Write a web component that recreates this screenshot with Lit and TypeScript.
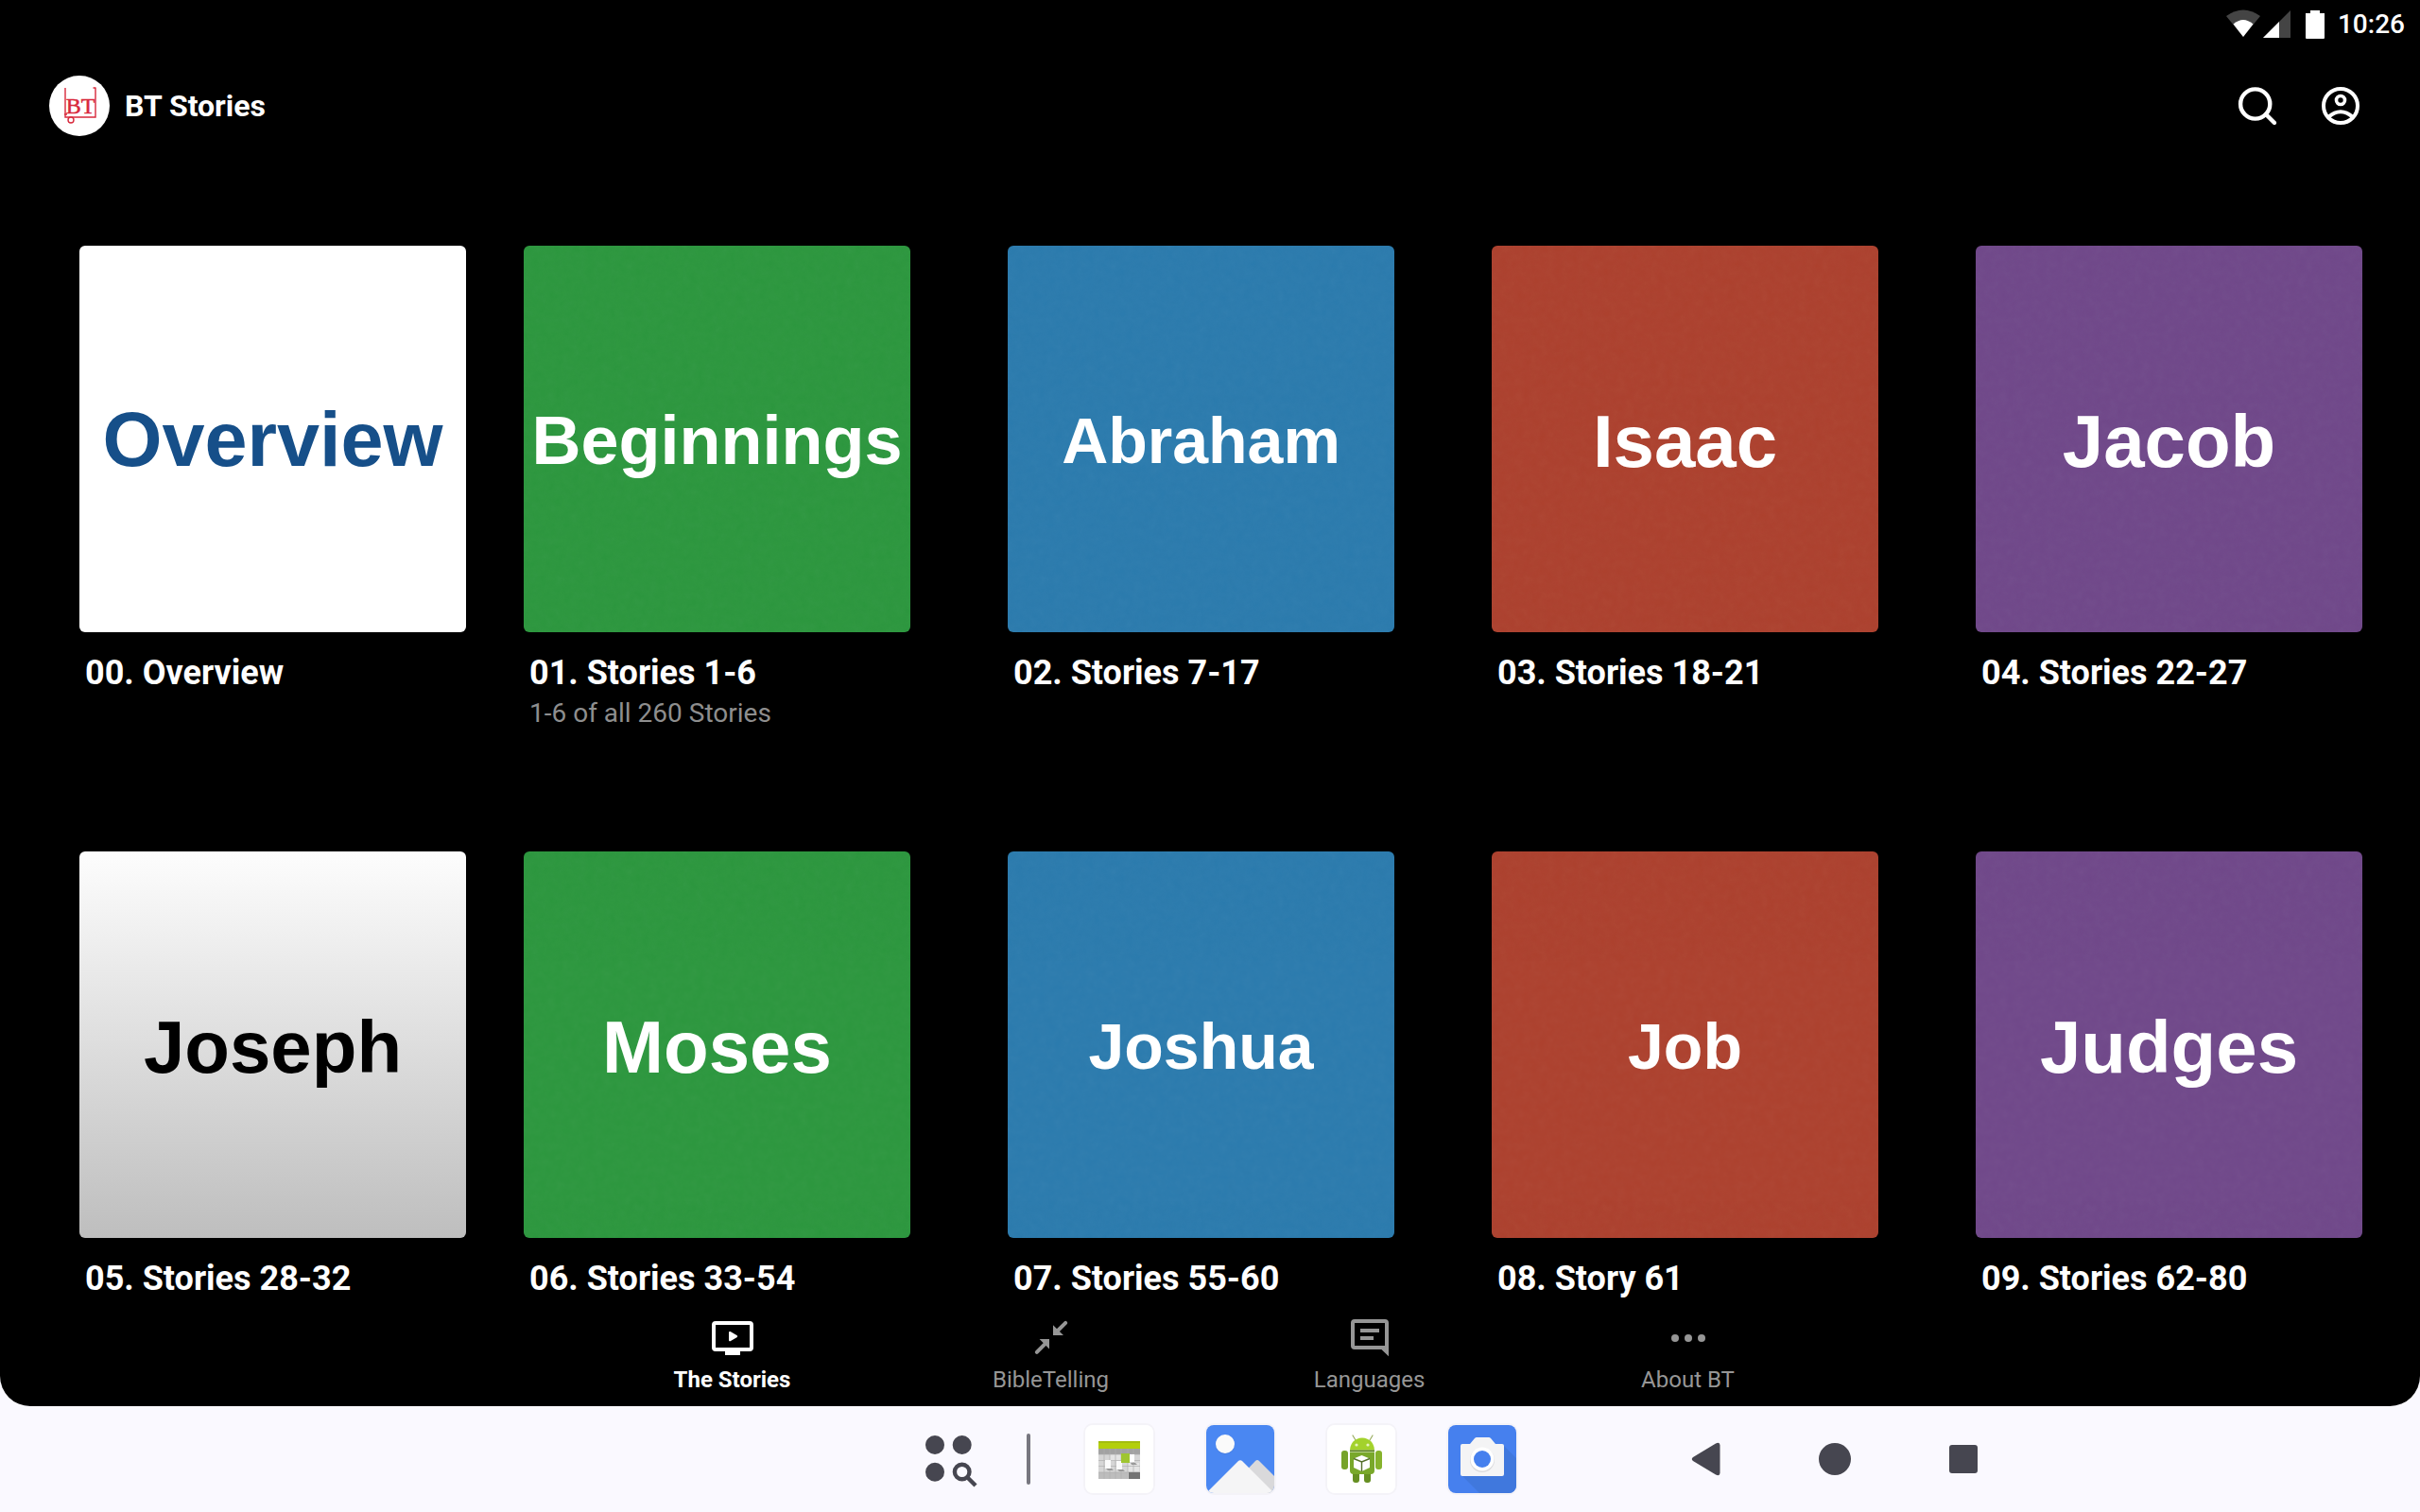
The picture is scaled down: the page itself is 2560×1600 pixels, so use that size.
import { LitElement, html, css, svg } from "lit";
import { customElement } from "lit/decorators.js";
import { classMap } from "lit/directives/class-map.js";

interface Series {
  cover: string;
  theme: string;
  size: string;
  title: string;
  note?: string;
}

const SERIES: Series[] = [
  { cover: "Overview", theme: "plain", size: "huge", title: "00. Overview" },
  { cover: "Beginnings", theme: "green", size: "small", title: "01. Stories 1-6", note: "1-6 of all 260 Stories" },
  { cover: "Abraham", theme: "blue", size: "tiny", title: "02. Stories 7-17" },
  { cover: "Isaac", theme: "red", size: "large", title: "03. Stories 18-21" },
  { cover: "Jacob", theme: "purple", size: "large", title: "04. Stories 22-27" },
  { cover: "Joseph", theme: "silver", size: "large", title: "05. Stories 28-32" },
  { cover: "Moses", theme: "green", size: "large", title: "06. Stories 33-54" },
  { cover: "Joshua", theme: "blue", size: "tiny", title: "07. Stories 55-60" },
  { cover: "Job", theme: "red", size: "tiny", title: "08. Story 61" },
  { cover: "Judges", theme: "purple", size: "large", title: "09. Stories 62-80" },
];

const TABS = [
  {
    label: "The Stories",
    icon: svg`<path fill-rule="evenodd" d="M3 3h18a2 2 0 0 1 2 2v12a2 2 0 0 1-2 2h-5v2H8v-2H3a2 2 0 0 1-2-2V5a2 2 0 0 1 2-2zM3 5v12h18V5z"/><path d="M10 9.1c0-.6.5-.8 1-.5l3.2 1.9c.5.3.5.8 0 1.1L11 13.5c-.5.3-1 0-1-.5z"/>`,
  },
  {
    label: "BibleTelling",
    icon: svg`<path d="M4.400 19.4l4.6-4.6M19.6 3.9l-4.6 4.6" stroke="currentColor" stroke-width="2" stroke-linecap="round"/><path d="M5.8 12.5H11v5.3zM13 5.1v5.400h5.5z"/>`,
  },
  {
    label: "Languages",
    icon: svg`<path fill-rule="evenodd" d="M4 2h16a2 2 0 0 1 2 2v17.6L18.2 18H4a2 2 0 0 1-2-2V4a2 2 0 0 1 2-2zM4 4v12h16V4z"/><path d="M7 7h10v2H7zM7 11h7v2H7z"/>`,
  },
  {
    label: "About BT",
    icon: svg`<circle cx="5" cy="12" r="2"/><circle cx="12" cy="12" r="2"/><circle cx="19" cy="12" r="2"/>`,
  },
];

@customElement("series-card")
export class SeriesCard extends LitElement {
  static properties = { item: { attribute: false } };
  declare item: Series;

  static styles = css`
    :host {
      display: block;
    }
    .card {
      display: block;
      color: #fff;
      text-decoration: none;
    }
    .cover {
      display: grid;
      place-items: center;
      aspect-ratio: 1;
      border-radius: 6px;
      overflow: hidden;
      font-family: "Liberation Sans", Arial, sans-serif;
      font-weight: 700;
      line-height: 1;
    }
    .cover > * {
      grid-area: 1 / 1;
    }
    .grain {
      width: 100%;
      height: 100%;
      opacity: 0.04;
    }
    .word {
      z-index: 1;
      padding-top: 2px;
    }
    .huge { font-size: 81px; }
    .large { font-size: 78px; padding-top: 4px; }
    .small { font-size: 72px; }
    .tiny { font-size: 68px; }
    .plain { background: #fff; color: #164f89; }
    .silver { background: linear-gradient(#fdfdfd, #bebebe); color: #000; }
    .green { background: #2c973e; }
    .blue { background: #2b7bae; }
    .red { background: #ad412e; }
    .purple { background: #70488a; }
    .title {
      margin: 22px 0 0;
      padding-left: 6px;
      font-size: 36px;
      line-height: 42px;
      font-weight: 700;
    }
    .note {
      margin: 5px 0 0;
      padding-left: 6px;
      font-size: 28px;
      line-height: 34px;
      color: #8e8e8e;
    }
  `;

  render() {
    const { cover, theme, size, title, note } = this.item;
    const flat = theme === "plain" || theme === "silver";
    return html`
      <a class="card" href="#stories">
        <div class="cover ${theme}">
          ${flat
            ? null
            : html`<svg class="grain" aria-hidden="true">
                <filter id="grain">
                  <feTurbulence type="fractalNoise" baseFrequency="0.12" numOctaves="4" seed="4" />
                  <feColorMatrix type="saturate" values="0" />
                </filter>
                <rect width="100%" height="100%" filter="url(#grain)" />
              </svg>`}
          <span class="word ${size}">${cover}</span>
        </div>
        <h2 class="title">${title}</h2>
        ${note ? html`<p class="note">${note}</p>` : null}
      </a>
    `;
  }
}

@customElement("app-root")
export class AppRoot extends LitElement {
  static styles = css`
    :host {
      display: flex;
      flex-direction: column;
      height: 100vh;
      overflow: hidden;
      background: #faf9ff;
      font-family: Roboto, sans-serif;
      color: #fff;
    }
    button {
      display: grid;
      place-items: center;
      padding: 0;
      border: 0;
      background: none;
      color: inherit;
      font: inherit;
      cursor: pointer;
    }
    svg {
      display: block;
    }
    .screen {
      flex: 1;
      min-height: 0;
      display: flex;
      flex-direction: column;
      background: #000;
      border-radius: 0 0 32px 32px;
      overflow: hidden;
    }
    .status {
      display: flex;
      justify-content: flex-end;
      align-items: center;
      gap: 13px;
      height: 50px;
      padding-right: 16px;
      font-size: 28px;
      font-weight: 500;
    }
    .header {
      display: flex;
      align-items: center;
      gap: 16px;
      height: 124px;
      padding: 0 60px 0 52px;
    }
    .brand {
      flex: 1;
      margin: 0;
      font-size: 32px;
      font-weight: 700;
    }
    .actions {
      display: flex;
      gap: 40px;
    }
    .content {
      flex: 1;
      min-height: 0;
      overflow: hidden;
      padding-top: 86px;
    }
    .grid {
      display: grid;
      grid-template-columns: repeat(5, 1fr);
      row-gap: 129px;
    }
    .cell {
      padding: 0 61px 0 42px;
    }
    .cell:nth-child(5n + 1) {
      padding: 0 19px 0 84px;
    }
    .tabs {
      display: flex;
      justify-content: center;
      height: 112px;
    }
    .tab {
      flex: 0 1 337px;
      align-content: start;
      gap: 4px;
      padding-top: 16px;
      font-size: 24px;
      line-height: 32px;
      color: #969696;
    }
    .tab.active {
      color: #fff;
      font-weight: 700;
    }
    .taskbar {
      display: grid;
      grid-template-columns: 968fr auto 169fr auto 451fr;
      align-items: center;
      height: 112px;
      color: #464650;
    }
    .dock {
      grid-column: 2;
      display: flex;
      align-items: center;
    }
    .divider {
      width: 4px;
      height: 54px;
      margin: 0 58px 0 46px;
      border-radius: 2px;
      background: #777780;
    }
    .apps {
      display: flex;
      gap: 56px;
    }
    .app {
      border-radius: 8px;
      overflow: hidden;
      box-shadow: 0 0 0 2px #f4f3f8;
    }
    .system {
      grid-column: 4;
      display: flex;
      gap: 72px;
    }
  `;

  private calendar() {
    return svg`
      <rect width="72" height="72" fill="#fff"/>
      <rect x="14" y="25" width="44" height="32" fill="#d6d6d6"/>
      <rect x="14" y="25" width="44" height="6" fill="#a2a2a2"/>
      <rect x="14" y="50" width="31" height="7" fill="#bdbdbd"/>
      <path d="M26 31h12v7H26zM45 40h12v9H45z" fill="#e4e4e4"/>
      <path d="M20 25v32M26 25v32M32 25v32M38 25v32M45 25v32M51 25v32M14 31h44M14 37.5h44M14 43.5h44M14 50h44" stroke="#b0b0b0" stroke-width=".7"/>
      <rect x="14" y="17" width="44" height="8" fill="#b3cf0c"/>
      <rect x="14" y="17" width="44" height="2" fill="#a3bd10"/>
      <path d="M22 46h6l2 2h-6zM34 47h6l2 2h-6zM48 40h5l2 2h-6z" fill="#999"/>
      <rect x="21" y="37" width="6" height="9" fill="#fafafa"/>
      <rect x="33" y="38" width="6" height="9" fill="#fafafa"/>
      <rect x="47" y="31" width="5" height="8" fill="#fff"/>
      <rect x="38" y="30" width="9" height="10" fill="#9fc530"/>
      <rect x="46" y="50" width="12" height="7" fill="#747474"/>`;
  }

  private photos() {
    return svg`
      <rect width="72" height="72" fill="#4a87f2"/>
      <circle cx="20" cy="21" r="10" fill="#3f73cf" opacity=".5"/>
      <circle cx="20" cy="20" r="10" fill="#fafafa"/>
      <path d="M34 57 52 38q2-2 4 0L72 54v18H48z" fill="#d9d9db"/>
      <path d="M44 47 72 72H50z" fill="#cfcfd1"/>
      <path d="M2 70 33.5 38.5q2.5-2.5 5 0L72 72H4q-2 0-2-2z" fill="#f5f5f6"/>`;
  }

  private android() {
    return svg`
      <rect width="72" height="72" fill="#fff"/>
      <path d="M30 16l-3-5M45 16l3-5" stroke="#9aae62" stroke-width="1.2" stroke-linecap="round"/>
      <rect x="27" y="48" width="7" height="13" rx="3" fill="#668f22"/>
      <rect x="39" y="48" width="7" height="13" rx="3" fill="#668f22"/>
      <rect x="15" y="27" width="7" height="20" rx="3" fill="#76a329"/>
      <rect x="51" y="27" width="7" height="20" rx="3" fill="#86b32c"/>
      <path d="M24 28.5h26V48q0 4-4 4H28q-4 0-4-4z" fill="#79a82a"/>
      <path d="M24 26.5C25 9 49 9 50 26.5z" fill="#a3d22c"/>
      <path d="M24 26.5h26v1.5H24z" fill="#587d1d"/>
      <circle cx="31" cy="21" r="1.6" fill="#e7f5c0"/>
      <circle cx="43" cy="21" r="1.6" fill="#e7f5c0"/>
      <path d="M28 35.5 36.5 32 45 35.5V45l-8.5 4L28 45z" fill="#fff"/>
      <path d="M28 35.5l8.5 3.500 8.5-3.500M36.5 39v10" fill="none" stroke="#55702a" stroke-width="1.4"/>`;
  }

  private camera() {
    return svg`
      <rect width="72" height="72" fill="#4680ee"/>
      <path d="M59 22 72 35v37H33L15 54z" fill="#4078dd"/>
      <path d="M15 20h8l5-6q1-1 2-1h13q1 0 2 1l5 6h7q2 0 2 2v30q0 2-2 2H15q-2 0-2-2V22q0-2 2-2z" fill="#f4f4f5"/>
      <circle cx="36" cy="37" r="13" fill="#dcdcde"/>
      <circle cx="36" cy="36" r="12.5" fill="#fff"/>
      <circle cx="36" cy="36" r="9" fill="#4680ee"/>`;
  }

  render() {
    const apps = [
      { name: "Calendar", art: this.calendar() },
      { name: "Gallery", art: this.photos() },
      { name: "Android", art: this.android() },
      { name: "Camera", art: this.camera() },
    ];
    return html`
      <div class="screen">
        <div class="status">
          <svg width="106" height="32" viewBox="0 0 106 32" fill="#fff" aria-hidden="true">
            <path d="M1 8Q19-5 37 8L19 30z" fill="#444" />
            <path d="M8.5 16.5Q19 7.5 29.5 16.5L19 30z" />
            <path d="M40 31 69 2v29z" fill="#444" />
            <path d="M40 31 57 14v17z" />
            <path d="M90 2h10v3h5v26q0 1-1 1H86q-1 0-1-1V5h5z" />
          </svg>
          <time>10:26</time>
        </div>
        <header class="header">
          <svg width="64" height="64" viewBox="0 0 64 64" role="img" aria-label="BT">
            <circle cx="32" cy="32" r="32" fill="#fff" />
            <path d="M17 13v31h32V13M46.5 13h3M16 41h3" fill="none" stroke="#d8283b" stroke-width="1.4" />
            <circle cx="23" cy="47" r="3" fill="#fff" stroke="#d8283b" stroke-width="1.4" />
            <text x="33" y="40" text-anchor="middle" font-family="Liberation Serif, serif" font-weight="400" font-size="24" fill="#d8283b" stroke="#d8283b" stroke-width=".5">BT</text>
          </svg>
          <h1 class="brand">BT Stories</h1>
          <div class="actions">
            <button aria-label="Search">
              <svg width="48" height="48" viewBox="0 0 48 48" fill="none" stroke="#fff" stroke-width="4.4" stroke-linecap="round">
                <circle cx="21.7" cy="22" r="15.6" />
                <path d="M33 33l9 9" />
              </svg>
            </button>
            <button aria-label="Account">
              <svg width="48" height="48" viewBox="0 0 48 48" fill="none" stroke="#fff" stroke-width="4">
                <circle cx="24" cy="24" r="18" />
                <circle cx="24" cy="18" r="4.5" stroke-width="3.6" />
                <path d="M11 36q13-11.5 26 0" />
              </svg>
            </button>
          </div>
        </header>
        <main class="content">
          <div class="grid">
            ${SERIES.map((item) => html`<div class="cell"><series-card .item=${item}></series-card></div>`)}
          </div>
        </main>
        <nav class="tabs">
          ${TABS.map(
            (tab, i) => html`<button class=${classMap({ tab: true, active: i === 0 })}>
              <svg width="48" height="48" viewBox="0 0 24 24" fill="currentColor" aria-hidden="true">${tab.icon}</svg>
              <span>${tab.label}</span>
            </button>`
          )}
        </nav>
      </div>
      <footer class="taskbar">
        <div class="dock">
          <button aria-label="All apps">
            <svg width="72" height="72" viewBox="0 0 72 72" fill="currentColor">
              <circle cx="21" cy="21" r="10" />
              <circle cx="49.7" cy="21" r="10" />
              <circle cx="21" cy="49.7" r="10" />
              <circle cx="49.7" cy="49.5" r="7.8" fill="none" stroke="currentColor" stroke-width="4.4" />
              <path d="M55.5 55.5l8.5 8.5" stroke="currentColor" stroke-width="4.4" />
            </svg>
          </button>
          <span class="divider"></span>
          <div class="apps">
            ${apps.map(
              (app) => html`<button class="app" aria-label=${app.name}>
                <svg width="72" height="72" viewBox="0 0 72 72">${app.art}</svg>
              </button>`
            )}
          </div>
        </div>
        <div class="system">
          <button aria-label="Back">
            <svg width="64" height="64" viewBox="0 0 64 64" fill="currentColor">
              <path d="M18 30 42 15.5q4.5-2 4.5 2v29q0 4-4.5 2L18 34q-2.5-2 0-4z" />
            </svg>
          </button>
          <button aria-label="Home">
            <svg width="64" height="64" viewBox="0 0 64 64" fill="currentColor"><circle cx="32" cy="32" r="17" /></svg>
          </button>
          <button aria-label="Recent apps">
            <svg width="64" height="64" viewBox="0 0 64 64" fill="currentColor"><rect x="17" y="17" width="30" height="30" rx="3" /></svg>
          </button>
        </div>
      </footer>
    `;
  }
}
